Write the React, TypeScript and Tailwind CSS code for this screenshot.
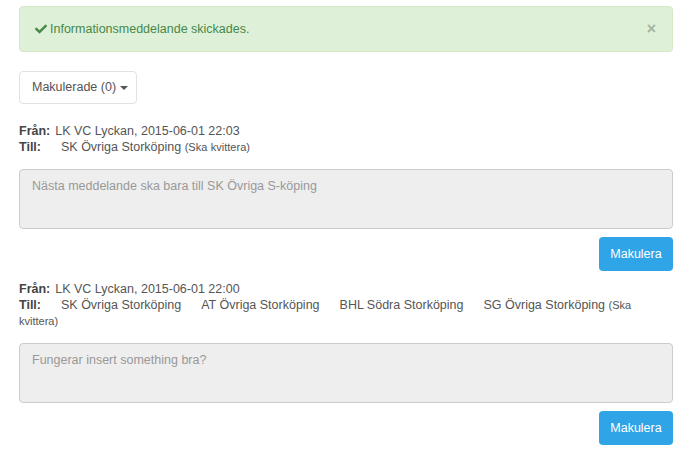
import { FaCheck } from "react-icons/fa";

type Msg = {
  from: string;
  to: string[];
  text: string;
};

const messages: Msg[] = [
  {
    from: "LK VC Lyckan, 2015-06-01 22:03",
    to: ["SK Övriga Storköping"],
    text: "Nästa meddelande ska bara till SK Övriga S-köping",
  },
  {
    from: "LK VC Lyckan, 2015-06-01 22:00",
    to: [
      "SK Övriga Storköping",
      "AT Övriga Storköping",
      "BHL Södra Storköping",
      "SG Övriga Storköping",
    ],
    text: "Fungerar insert something bra?",
  },
];

const Message = ({ msg }: { msg: Msg }) => {
  return (
    <div>
      <div className="leading-[16px]">
        <span className="font-bold text-[#444]">Från:</span>
        <span className="ml-[5px]">{msg.from}</span>
      </div>
      <div className="leading-[16px] mr-[12px]">
        <span className="font-bold text-[#444] mr-[1px]">Till:</span>
        {msg.to.map((t, i) => (
          <span key={t} className={i === 0 ? "ml-[19px]" : "ml-[20px]"}>
            {t}
          </span>
        ))}{" "}
        <span className="text-[11px]">(Ska</span>{" "}
        <span className="text-[11px]">kvittera)</span>
      </div>
      <div className="mt-[14px] h-[60px] border border-[#ccc] bg-[#eee] rounded-[4px] px-[12px] py-[7px] text-[#999]">
        {msg.text}
      </div>
      <div className="flex justify-end mt-[8px]">
        <button className="h-[34px] w-[74px] rounded-[4px] bg-[#2fa4e7] text-white text-[12.5px]">
          Makulera
        </button>
      </div>
    </div>
  );
};

export default function App() {
  return (
    <div
      className="w-[684px] h-[459px] bg-white pl-[19px] pr-[11px] pt-[6px] text-[12.5px] text-[#555] overflow-hidden"
      style={{ fontFamily: '"Liberation Sans", Arial, sans-serif' }}
    >
      <div className="h-[46px] rounded-[4px] border border-[#d6e9c6] bg-[#dff0d8] text-[#468847] flex items-center pl-[15px] pr-[15px]">
        <FaCheck className="w-[12px] h-[12px] mr-[3px]" />
        <span>Informationsmeddelande skickades.</span>
        <span className="ml-auto mr-[1px] text-[16px] font-bold text-[#a3b59c] leading-none">
          ×
        </span>
      </div>

      <div className="mt-[19px]">
        <button className="h-[33px] w-[118px] border border-[#e2e2e2] rounded-[4px] bg-white text-[#555] text-[12.5px] flex items-center pl-[12px]">
          Makulerade (0)
          <span className="ml-[4px] mt-[1px] w-0 h-0 border-l-[4px] border-r-[4px] border-t-[4px] border-l-transparent border-r-transparent border-t-[#555]" />
        </button>
      </div>

      <div className="mt-[19px] flex flex-col gap-[10px]">
        {messages.map((m) => (
          <Message key={m.from} msg={m} />
        ))}
      </div>
    </div>
  );
}
